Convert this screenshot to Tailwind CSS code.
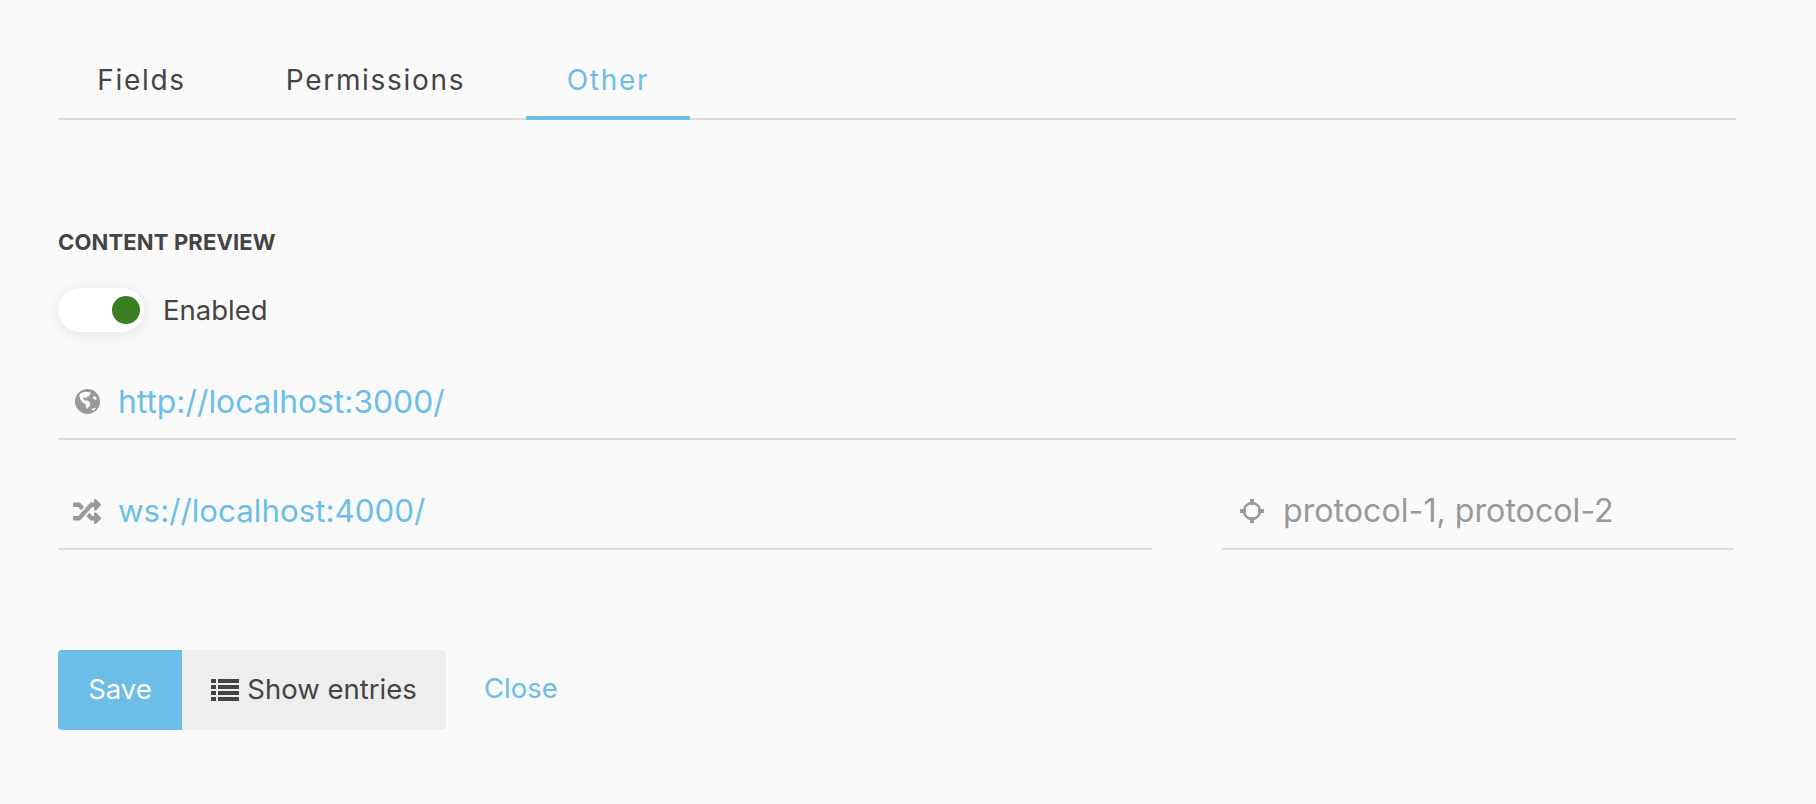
<!DOCTYPE html>
<html lang="en">

<head>
    <meta charset="UTF-8" />
    <title>Other settings</title>
    <script src="https://cdn.jsdelivr.net/npm/@tailwindcss/browser@4"></script>
</head>

<body class="bg-[#fafafa] min-h-screen font-[Inter,sans-serif] text-[#444444]">
    <main class="w-[1678px] ml-[58px]">
        <!-- Tabs -->
        <nav class="flex gap-[21px] h-[120px] pt-[58px] border-b-2 border-[#dddddd] text-[28px] leading-[44px] tracking-[1.7px]">
            <a class="w-[167px] h-[62px] text-center">Fields</a>
            <a class="w-[259px] h-[62px] text-center">Permissions</a>
            <a class="w-[164px] h-[62px] text-center text-[#6cbee8] border-b-4 border-[#6cbee8]">Other</a>
        </nav>

        <!-- Content preview -->
        <h2 class="mt-[108px] text-[22px] leading-[28px] font-bold uppercase tracking-[0.15px]">Content preview</h2>

        <div class="flex items-center gap-[19px] mt-[32px]">
            <div class="w-[86px] h-[44px] rounded-full bg-white shadow-[0_2px_14px_rgba(0,0,0,0.10)] flex items-center justify-end pr-[4px]">
                <span class="w-[28px] h-[28px] rounded-full bg-[#3a7f22]"></span>
            </div>
            <span class="text-[27.500px] leading-[44px]">Enabled</span>
        </div>

        <!-- Url -->
        <div class="flex items-center h-[73px] mt-[35px] border-b-2 border-[#dddddd]">
            <svg class="shrink-0 ml-[17px] w-[25px] h-[25px] -mt-[3px]" viewBox="0 0 24 24">
                <circle cx="12" cy="12" r="12" fill="#999999" />
                <path fill="#fafafa" d="M5 4.500 9 2.600l5 .4 1.600 1.600-2 .8.4 1.600-2.200.2-.8 1.600-2.400-.8-.8 1.400 1.800 1.600 3 .2 2 2.200-.6 3-2 2.400-1.200-.4-.6-3.600-2.800-1.600-2.200-3-1-3.400L4 6.200z" />
                <path fill="#fafafa" d="m17 7.500 2.600-.6 1.400 3-1.800.4-1.600-1.200zM15.500 19.500l3.500-1.500 1 .6-2.500 2.400z" />
            </svg>
            <input class="min-w-0 ml-[18px] -mt-[2px] flex-1 bg-transparent outline-none text-[31.800px] text-[#6cbee8]" value="http://localhost:3000/" />
        </div>

        <!-- Websocket -->
        <div class="flex justify-between mt-[37px]">
            <div class="flex items-center w-[1094px] h-[73px] border-b-2 border-[#dddddd]">
                <svg class="shrink-0 ml-[15px] w-[28px] h-[25px] -mt-[3px]" viewBox="0 32 512 448" preserveAspectRatio="none">
                    <path fill="#999999" d="M504.971 359.029c9.373 9.373 9.373 24.569 0 33.941l-80 79.984c-15.010 15.010-40.971 4.490-40.971-16.971V416h-58.785a12.004 12.004 0 0 1-8.773-3.812l-70.556-75.596 53.333-57.143L352 336h32v-39.981c0-21.438 25.943-31.998 40.971-16.971l80 79.981zM12 176h84l52.781 56.551 53.333-57.143-70.556-75.596A11.999 11.999 0 0 0 122.785 96H12c-6.627 0-12 5.373-12 12v56c0 6.627 5.373 12 12 12zm372 0v39.984c0 21.460 25.961 31.980 40.971 16.971l80-79.984c9.373-9.373 9.373-24.569 0-33.941l-80-79.981C409.943 24.021 384 34.582 384 56.019V96h-58.785a12.004 12.004 0 0 0-8.773 3.812L96 336H12c-6.627 0-12 5.373-12 12v56c0 6.627 5.373 12 12 12h110.785c3.326 0 6.503-1.381 8.773-3.812L352 176h32z" />
                </svg>
                <input class="min-w-0 ml-[17px] -mt-[2px] flex-1 bg-transparent outline-none text-[31.300px] text-[#6cbee8]" value="ws://localhost:4000/" />
            </div>
            <div class="flex items-center w-[512px] h-[73px] mr-[2px] border-b-2 border-[#dddddd]">
                <svg class="shrink-0 ml-[18px] w-[24px] h-[24px] -mt-[3px]" viewBox="0 0 24 24">
                    <circle cx="12" cy="12" r="8" fill="none" stroke="#999999" stroke-width="2.500" />
                    <path stroke="#999999" stroke-width="4" d="M12 0v6M12 18v6M0 12h6M18 12h6" />
                </svg>
                <input class="min-w-0 ml-[19px] -mt-[2px] flex-1 bg-transparent outline-none text-[32.200px] text-[#999999] placeholder:text-[#999999]" placeholder="protocol-1, protocol-2" />
            </div>
        </div>

        <!-- Actions -->
        <div class="flex items-center mt-[100px]">
            <button class="w-[124px] h-[80px] rounded-l-[4px] bg-[#6cbee8] text-white text-[27.500px]">Save</button>
            <button class="flex items-center justify-center gap-[8px] w-[264px] h-[80px] rounded-r-[4px] bg-[#eeeeee] text-[27.500px]">
                <svg class="shrink-0 w-[28px] h-[22px]" viewBox="0 0 28 22">
                    <path fill="#444444" d="M0 0h5v4H0zM7 0h21v4H7zM0 6h5v4H0zM7 6h21v4H7zM0 12h5v4H0zM7 12h21v4H7zM0 18h5v4H0zM7 18h21v4H7z" />
                </svg>
                Show entries
            </button>
            <a class="ml-[38px] -mt-[2px] text-[27.500px] text-[#6cbee8]">Close</a>
        </div>
    </main>
</body>

</html>
